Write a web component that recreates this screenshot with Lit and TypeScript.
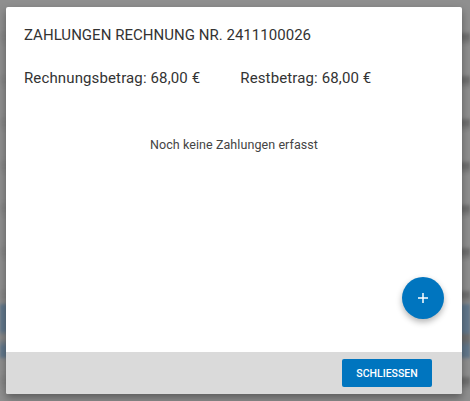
import { LitElement, html, css } from "lit";
import { customElement } from "lit/decorators.js";

@customElement("app-root")
export class AppRoot extends LitElement {
  static styles = css`
    :host {
      display: flex;
      box-sizing: border-box;
      position: relative;
      width: 470px;
      height: 401px;
      padding: 7px 8px 7px 6px;
      overflow: hidden;
      font-family: Roboto, "Liberation Sans", sans-serif;
      color: #333;
      background: #8f8f8f;
    }
    .backdrop {
      position: absolute;
      inset: 0;
      background:
        repeating-linear-gradient(180deg, transparent 0, transparent 28px, #707070 32px, #707070 35px, transparent 43px) 100% 3px / 12px 100% no-repeat,
        repeating-linear-gradient(180deg, transparent 0, transparent 26px, #888 32px, #888 35px, transparent 43px) 0 3px / 8px 100% no-repeat,
        linear-gradient(180deg, transparent 302px, #62788c 306px, #62788c 356px, transparent 360px);
      filter: blur(1px);
    }
    .dialog {
      position: relative;
      flex: 1;
      display: flex;
      flex-direction: column;
      background: #fff;
      border-radius: 2px;
      box-shadow: 0 4px 8px rgba(0, 0, 0, 0.36);
      overflow: hidden;
    }
    .body {
      flex: 1;
      display: flex;
      flex-direction: column;
      padding: 19px 18px 0;
      position: relative;
    }
    h1 {
      margin: 0;
      font-size: 15px;
      line-height: 18px;
      font-weight: 400;
      letter-spacing: 0.03px;
    }
    .amounts {
      display: flex;
      gap: 40px;
      margin-top: 25px;
      font-size: 15px;
      line-height: 18px;
      letter-spacing: 0.13px;
    }
    .empty {
      margin-top: 50px;
      text-align: center;
      font-size: 12.5px;
      line-height: 16px;
      letter-spacing: 0.08px;
      color: #444;
    }
    .fab {
      position: absolute;
      right: 18px;
      bottom: 33px;
      width: 42px;
      height: 42px;
      border: 0;
      border-radius: 50%;
      padding: 0;
      display: flex;
      align-items: center;
      justify-content: center;
      background: #0075bf;
      box-shadow: 0 3px 6px rgba(0, 0, 0, 0.3);
    }
    .footer {
      height: 42px;
      flex: none;
      display: flex;
      align-items: center;
      justify-content: flex-end;
      padding: 0 30px;
      background: #dadada;
    }
    .close {
      width: 90px;
      height: 28px;
      border: 0;
      border-radius: 2px;
      padding: 0;
      background: #0075bf;
      color: #fff;
      font: 500 10.5px Roboto, sans-serif;
    }
  `;

  render() {
    return html`
      <div class="backdrop"></div>
      <div class="dialog">
        <div class="body">
          <h1>ZAHLUNGEN RECHNUNG NR. 2411100026</h1>
          <div class="amounts">
            <span>Rechnungsbetrag: 68,00 €</span>
            <span>Restbetrag: 68,00 €</span>
          </div>
          <div class="empty">Noch keine Zahlungen erfasst</div>
          <button class="fab" aria-label="Hinzufügen">
            <svg width="12" height="12" viewBox="0 0 12 12">
              <path d="M5.25 1h1.5v4.25H11v1.5H6.75V11h-1.5V6.75H1v-1.5h4.25z" fill="#fff" />
            </svg>
          </button>
        </div>
        <div class="footer"><button class="close">SCHLIESSEN</button></div>
      </div>
    `;
  }
}
